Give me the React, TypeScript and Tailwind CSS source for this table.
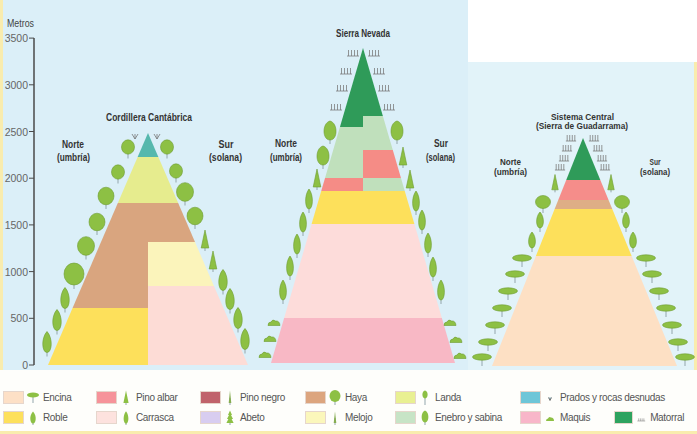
import React from "react";

const LEAF = "#8dc044";
const EDGE = "#6d9c31";
const STEM = "#93a6ac";
const FONT = "'Liberation Sans', Arial, sans-serif";

type Pt = { x: number; y: number; s?: number };

// ---- symbols used on the mountains ----
const Round = ({ x, y, s = 7 }: Pt) => (
  <g>
    <line x1={x} y1={y} x2={x} y2={y + s + 5} stroke={STEM} strokeWidth={1} />
    <ellipse cx={x} cy={y} rx={s} ry={s * 1.1} fill={LEAF} stroke={EDGE} strokeWidth={0.6} />
  </g>
);

const Wide = ({ x, y }: Pt) => (
  <g>
    <line x1={x} y1={y} x2={x} y2={y + 11} stroke={STEM} strokeWidth={1} />
    <ellipse cx={x} cy={y} rx={7.5} ry={6.5} fill={LEAF} stroke={EDGE} strokeWidth={0.6} />
  </g>
);

const drop = (x: number, y: number, w: number, h: number) =>
  `M${x},${y - h} C${x + w * 1.25},${y - h * 0.35} ${x + w},${y + h} ${x},${y + h} C${x - w},${y + h} ${x - w * 1.25},${y - h * 0.35} ${x},${y - h}Z`;

const Oval = ({ x, y, w = 4.5, h = 10 }: Pt & { w?: number; h?: number }) => (
  <g>
    <line x1={x} y1={y} x2={x} y2={y + h + 4} stroke={STEM} strokeWidth={1} />
    <path d={drop(x, y, w, h)} fill={LEAF} stroke={EDGE} strokeWidth={0.6} />
  </g>
);

const Pear = ({ x, y }: Pt) => (
  <g>
    <line x1={x} y1={y} x2={x} y2={y + 13} stroke={STEM} strokeWidth={1} />
    <path
      d={`M${x},${y - 10} C${x + 8},${y - 8} ${x + 8},${y + 9} ${x},${y + 9} C${x - 8},${y + 9} ${x - 8},${y - 8} ${x},${y - 10}Z`}
      fill={LEAF}
      stroke={EDGE}
      strokeWidth={0.6}
    />
  </g>
);

const Pine = ({ x, y, s = 1 }: Pt) => (
  <g>
    <line x1={x} y1={y} x2={x} y2={y + 11 * s} stroke={STEM} strokeWidth={1} />
    <path d={`M${x},${y - 10 * s} L${x + 3.8 * s},${y + 8 * s} L${x - 3.8 * s},${y + 8 * s}Z`} fill={LEAF} stroke={EDGE} strokeWidth={0.6} />
  </g>
);

const Flat = ({ x, y }: Pt) => (
  <g>
    <line x1={x} y1={y} x2={x} y2={y + 9} stroke={STEM} strokeWidth={1} />
    <ellipse cx={x} cy={y} rx={9.5} ry={3.2} fill={LEAF} stroke={EDGE} strokeWidth={0.6} />
  </g>
);

const Bush = ({ x, y }: Pt) => (
  <path
    d={`M${x - 6},${y + 2.5} Q${x - 6},${y - 1} ${x - 3},${y - 1} Q${x - 1.5},${y - 4.5} ${x + 1.5},${y - 2} Q${x + 5.5},${y - 2.5} ${x + 6},${y + 2.5}Z`}
    fill={LEAF}
    stroke={EDGE}
    strokeWidth={0.6}
  />
);

const Shrub = ({ x, y, s = 1 }: Pt) => (
  <g stroke="#7b7b7b" strokeWidth={0.8}>
    <line x1={x - 6 * s} y1={y + 3} x2={x + 6 * s} y2={y + 3} />
    {[-4.5, -1.5, 1.5, 4.5].map((d) => (
      <line key={d} x1={x + d * s} y1={y - 3} x2={x + d * s} y2={y + 3} />
    ))}
  </g>
);

const Grass = ({ x, y }: Pt) => (
  <g stroke="#777" strokeWidth={0.8} fill="none">
    <path d={`M${x - 3},${y - 3} L${x},${y + 2} L${x + 3},${y - 3}`} />
    <line x1={x} y1={y - 3} x2={x} y2={y + 2} />
  </g>
);

type Band = { y1: number; y2: number; side?: "l" | "r"; fill: string };

function Mountain({ id, ax, ay, base, left, right, bands }: { id: string; ax: number; ay: number; base: number; left: number; right: number; bands: Band[] }) {
  return (
    <g>
      <clipPath id={id}>
        <polygon points={`${ax},${ay} ${right},${base} ${left},${base}`} />
      </clipPath>
      <g clipPath={`url(#${id})`}>
        {bands.map((b, i) => {
          const x1 = b.side === "r" ? ax : left;
          const x2 = b.side === "l" ? ax : right;
          return <rect key={i} x={x1} y={b.y1} width={x2 - x1} height={b.y2 - b.y1} fill={b.fill} />;
        })}
      </g>
    </g>
  );
}

const Label = ({ x, y, w, size = 10, bold = true, children }: { x: number; y: number; w: number; size?: number; bold?: boolean; children: string }) => (
  <text
    x={x}
    y={y}
    textAnchor="middle"
    dominantBaseline="central"
    fontSize={size}
    fontWeight={bold ? 700 : 400}
    textLength={w}
    lengthAdjust="spacingAndGlyphs"
    fill="#333"
  >
    {children}
  </text>
);

function Chart() {
  const ticks = [0, 500, 1000, 1500, 2000, 2500, 3000, 3500];
  return (
    <svg className="absolute inset-0" width={697} height={370} fontFamily={FONT}>
      {/* axis */}
      <text x={7} y={23} fontSize={10} textLength={27} lengthAdjust="spacingAndGlyphs" dominantBaseline="central" fill="#444">
        Metros
      </text>
      <line x1={34} y1={38} x2={34} y2={365} stroke="#4a4a4a" strokeWidth={1.5} />
      {ticks.map((t, i) => {
        const y = 365 - i * 46.7;
        return (
          <g key={t}>
            <line x1={29} y1={y} x2={34} y2={y} stroke="#4a4a4a" strokeWidth={1} />
            <text x={28} y={y} textAnchor="end" dominantBaseline="central" fontSize={10.5} fill="#666">
              {t}
            </text>
          </g>
        );
      })}

      {/* Cordillera Cantábrica */}
      <Mountain
        id="cant"
        ax={148}
        ay={133}
        base={365}
        left={48}
        right={248}
        bands={[
          { y1: 130, y2: 157, fill: "#56b8ad" },
          { y1: 157, y2: 203, fill: "#e6ec8e" },
          { y1: 203, y2: 308, side: "l", fill: "#d9a57f" },
          { y1: 308, y2: 366, side: "l", fill: "#fde05b" },
          { y1: 203, y2: 242, side: "r", fill: "#d9a57f" },
          { y1: 242, y2: 286, side: "r", fill: "#fbf4bb" },
          { y1: 286, y2: 366, side: "r", fill: "#fddcd6" },
        ]}
      />
      <Grass x={135} y={137} />
      <Grass x={157} y={137} />
      {[
        [128, 147, 6.5],
        [118, 172, 6.5],
        [106, 196, 8],
        [97, 222, 8],
        [86, 246, 8.5],
        [74, 274, 10],
        [167, 147, 6.5],
        [176, 171, 6.5],
        [185, 192, 8.5],
        [195, 216, 8],
      ].map(([x, y, s]) => (
        <Round key={`${x}-${y}`} x={x} y={y} s={s} />
      ))}
      <Pine x={205} y={240} />
      <Pine x={213} y={261} />
      {[
        [65, 298],
        [57, 320],
        [47, 342],
        [223, 280],
        [230, 299],
        [238, 318],
        [245, 339],
      ].map(([x, y]) => (
        <Oval key={`${x}-${y}`} x={x} y={y} w={5} h={10.5} />
      ))}
      <Label x={149} y={117} w={86} size={10.5}>Cordillera Cantábrica</Label>
      <Label x={73} y={144} w={22}>Norte</Label>
      <Label x={73.5} y={157} w={33}>(umbría)</Label>
      <Label x={226} y={144} w={15}>Sur</Label>
      <Label x={225.5} y={157} w={33}>(solana)</Label>

      {/* Sierra Nevada */}
      <Mountain
        id="nev"
        ax={363}
        ay={48}
        base={363}
        left={271}
        right={455}
        bands={[
          { y1: 45, y2: 127, side: "l", fill: "#2f9b59" },
          { y1: 127, y2: 178, side: "l", fill: "#c0e0bc" },
          { y1: 178, y2: 191, side: "l", fill: "#f58c86" },
          { y1: 45, y2: 116, side: "r", fill: "#2f9b59" },
          { y1: 116, y2: 150, side: "r", fill: "#c0e0bc" },
          { y1: 150, y2: 178, side: "r", fill: "#f58c86" },
          { y1: 178, y2: 191, side: "r", fill: "#c0e0bc" },
          { y1: 191, y2: 224, fill: "#fde05b" },
          { y1: 224, y2: 318, fill: "#fddcda" },
          { y1: 318, y2: 364, fill: "#f8b8c5" },
        ]}
      />
      {[
        [353, 53],
        [346, 71],
        [342, 88],
        [336, 107],
        [374, 53],
        [379, 71],
        [384, 88],
        [389, 107],
      ].map(([x, y]) => (
        <Shrub key={`${x}-${y}`} x={x} y={y} />
      ))}
      <Pear x={330} y={131} />
      <Pear x={323} y={156} />
      <Pear x={397} y={131} />
      <Pine x={317} y={179} />
      <Pine x={403} y={157} />
      <Pine x={410} y={180} />
      {[
        [309, 199],
        [303, 222],
        [297, 244],
        [290, 266],
        [283, 290],
        [416, 201],
        [422, 220],
        [428, 243],
        [433, 267],
        [441, 290],
      ].map(([x, y]) => (
        <Oval key={`${x}-${y}`} x={x} y={y} w={4} h={10} />
      ))}
      {[
        [274, 323],
        [270, 339],
        [265, 355],
        [450, 323],
        [456, 340],
        [460, 356],
      ].map(([x, y]) => (
        <Bush key={`${x}-${y}`} x={x} y={y} />
      ))}
      <Label x={363} y={33} w={54}>Sierra Nevada</Label>
      <Label x={286} y={143} w={22}>Norte</Label>
      <Label x={286} y={157} w={32}>(umbría)</Label>
      <Label x={441} y={143} w={14}>Sur</Label>
      <Label x={440.5} y={157} w={29}>(solana)</Label>

      {/* Sistema Central */}
      <Mountain
        id="cen"
        ax={583}
        ay={138}
        base={366}
        left={492}
        right={677}
        bands={[
          { y1: 135, y2: 180, fill: "#2f9b59" },
          { y1: 180, y2: 200, fill: "#f58d8a" },
          { y1: 200, y2: 209, fill: "#deae86" },
          { y1: 209, y2: 256, fill: "#fde05b" },
          { y1: 256, y2: 367, fill: "#fde0c4" },
        ]}
      />
      {[
        [571, 139],
        [567, 149],
        [564, 159],
        [560, 168],
        [594, 139],
        [598, 149],
        [602, 159],
        [605, 168],
      ].map(([x, y]) => (
        <Shrub key={`${x}-${y}`} x={x} y={y - 1} s={0.85} />
      ))}
      <Pine x={555} y={183} s={0.85} />
      <Pine x={611} y={183} s={0.85} />
      <Wide x={543} y={202} />
      <Wide x={622} y={202} />
      {[
        [540, 220],
        [532, 240],
        [626, 220],
        [633, 240],
      ].map(([x, y]) => (
        <Oval key={`${x}-${y}`} x={x} y={y} w={4} h={8} />
      ))}
      {[
        [522, 258],
        [515, 274],
        [508, 291],
        [502, 308],
        [495, 325],
        [488, 342],
        [482, 357],
        [646, 258],
        [652, 274],
        [659, 291],
        [666, 308],
        [672, 325],
        [678, 342],
        [685, 357],
      ].map(([x, y]) => (
        <Flat key={`${x}-${y}`} x={x} y={y} />
      ))}
      <Label x={582.5} y={117} w={63} size={8.5}>Sistema Central</Label>
      <Label x={582} y={126} w={92} size={8.5}>(Sierra de Guadarrama)</Label>
      <Label x={510.5} y={162} w={21} size={8.5}>Norte</Label>
      <Label x={510.5} y={172} w={33} size={8.5}>(umbría)</Label>
      <Label x={655} y={162} w={11} size={8.5}>Sur</Label>
      <Label x={655} y={172} w={30} size={8.5}>(solana)</Label>
    </svg>
  );
}

// ---- legend icons (12x15) ----
const icons: Record<string, React.ReactNode> = {
  encina: (
    <>
      <line x1={6} y1={5} x2={6} y2={13} stroke={STEM} />
      <ellipse cx={6} cy={5} rx={6} ry={2.6} fill={LEAF} />
    </>
  ),
  roble: (
    <>
      <line x1={6} y1={8} x2={6} y2={15} stroke={STEM} />
      <path d={drop(6, 7.5, 3.2, 6)} fill={LEAF} />
    </>
  ),
  pinoAlbar: (
    <>
      <line x1={6} y1={8} x2={6} y2={15} stroke={STEM} />
      <path d="M6,0.5 L8.6,13 L3.4,13Z" fill={LEAF} />
    </>
  ),
  carrasca: (
    <>
      <line x1={6} y1={8} x2={6} y2={15} stroke={STEM} />
      <path d={drop(6, 7.5, 2.8, 6.2)} fill={LEAF} />
    </>
  ),
  pinoNegro: (
    <>
      <line x1={6} y1={8} x2={6} y2={15} stroke={STEM} />
      <path d="M6,0.5 L7.3,13 L4.7,13Z" fill="#86ad52" />
    </>
  ),
  abeto: (
    <>
      <line x1={6} y1={10} x2={6} y2={15} stroke={STEM} />
      <path d="M6,0.5 L8,5 L7,5 L9,9 L7.6,9 L9.6,13 L2.4,13 L4.4,9 L3,9 L5,5 L4,5Z" fill={LEAF} />
    </>
  ),
  haya: (
    <>
      <line x1={6} y1={8} x2={6} y2={15} stroke={STEM} />
      <ellipse cx={6} cy={6} rx={5.5} ry={6} fill={LEAF} />
    </>
  ),
  melojo: (
    <>
      <line x1={6} y1={8} x2={6} y2={15} stroke={STEM} />
      <path d="M6,1.5 L7.3,13 L4.7,13Z" fill="#86ad52" />
    </>
  ),
  landa: (
    <>
      <line x1={6} y1={6} x2={6} y2={15} stroke={STEM} />
      <path d="M6,0.5 C9.5,1.5 9.5,8 6,8.5 C2.5,8 2.5,1.5 6,0.5Z" fill={LEAF} />
    </>
  ),
  enebro: (
    <>
      <line x1={6} y1={8} x2={6} y2={15} stroke={STEM} />
      <path d="M6,0.5 C10.5,2 10.5,12.5 6,12.5 C1.5,12.5 1.5,2 6,0.5Z" fill={LEAF} />
    </>
  ),
  prados: <path d="M4.5,7.5 L6,10.5 L7.5,7.5" stroke="#777" strokeWidth={1} fill="#8fb6c0" />,
  maquis: <path d="M2,11 Q2,8.5 4,8.5 Q5,6 7,7.5 Q10,7.5 10,11Z" fill={LEAF} />,
  matorral: (
    <g stroke="#8a8a8a" strokeWidth={0.7}>
      <line x1={1.5} y1={11.5} x2={10.5} y2={11.5} />
      <line x1={3} y1={8.5} x2={3} y2={11.5} />
      <line x1={5} y1={8.5} x2={5} y2={11.5} />
      <line x1={7} y1={8.5} x2={7} y2={11.5} />
      <line x1={9} y1={8.5} x2={9} y2={11.5} />
    </g>
  ),
};

function Item({ color, icon, label, w }: { color: string; icon: string; label: string; w: string }) {
  return (
    <div className={`flex items-center ${w}`}>
      <div className="w-[21px] h-[13px] border border-[#e6d6cc]" style={{ backgroundColor: color }} />
      <svg className="ml-[3px]" width={12} height={15} viewBox="0 0 12 15">
        {icons[icon]}
      </svg>
      <span className="ml-[4px] text-[10px] leading-none tracking-[-0.35px] text-[#555]">{label}</span>
    </div>
  );
}

export default function App() {
  return (
    <div className="w-[697px] h-[434px] bg-white flex flex-col overflow-hidden font-['Liberation_Sans',Arial,sans-serif]">
      <div className="relative h-[370px] flex shrink-0">
        <div className="w-[468px] bg-[#dbeff8] border-l-[3px] border-[#f9ecae]" />
        <div className="flex-1 flex flex-col">
          <div className="h-[62px] bg-white" />
          <div className="flex-1 bg-[#e2f3f9] border-r-[3px] border-[#f9ecae]" />
        </div>
        <Chart />
      </div>

      <div className="flex-1 flex flex-col gap-[5px] pt-[20px] pl-[3px] bg-[#fefefb]">
        <div className="flex">
          <Item w="w-[93px]" color="#fde0c6" icon="encina" label="Encina" />
          <Item w="w-[104px]" color="#f6939a" icon="pinoAlbar" label="Pino albar" />
          <Item w="w-[105px]" color="#c0636b" icon="pinoNegro" label="Pino negro" />
          <Item w="w-[90px]" color="#dca57e" icon="haya" label="Haya" />
          <Item w="w-[125px]" color="#e9f092" icon="landa" label="Landa" />
          <Item w="w-[160px]" color="#6ec6d8" icon="prados" label="Prados y rocas desnudas" />
        </div>
        <div className="flex">
          <Item w="w-[93px]" color="#fde05b" icon="roble" label="Roble" />
          <Item w="w-[104px]" color="#fde2de" icon="carrasca" label="Carrasca" />
          <Item w="w-[105px]" color="#d8cdf0" icon="abeto" label="Abeto" />
          <Item w="w-[90px]" color="#fbf7bb" icon="melojo" label="Melojo" />
          <Item w="w-[125px]" color="#c7e4c6" icon="enebro" label="Enebro y sabina" />
          <Item w="w-[94px]" color="#f8b6c9" icon="maquis" label="Maquis" />
          <Item w="w-[70px]" color="#2ea35f" icon="matorral" label="Matorral" />
        </div>
      </div>
      <div className="h-[3px] bg-[#f9ecae] shrink-0" />
    </div>
  );
}
